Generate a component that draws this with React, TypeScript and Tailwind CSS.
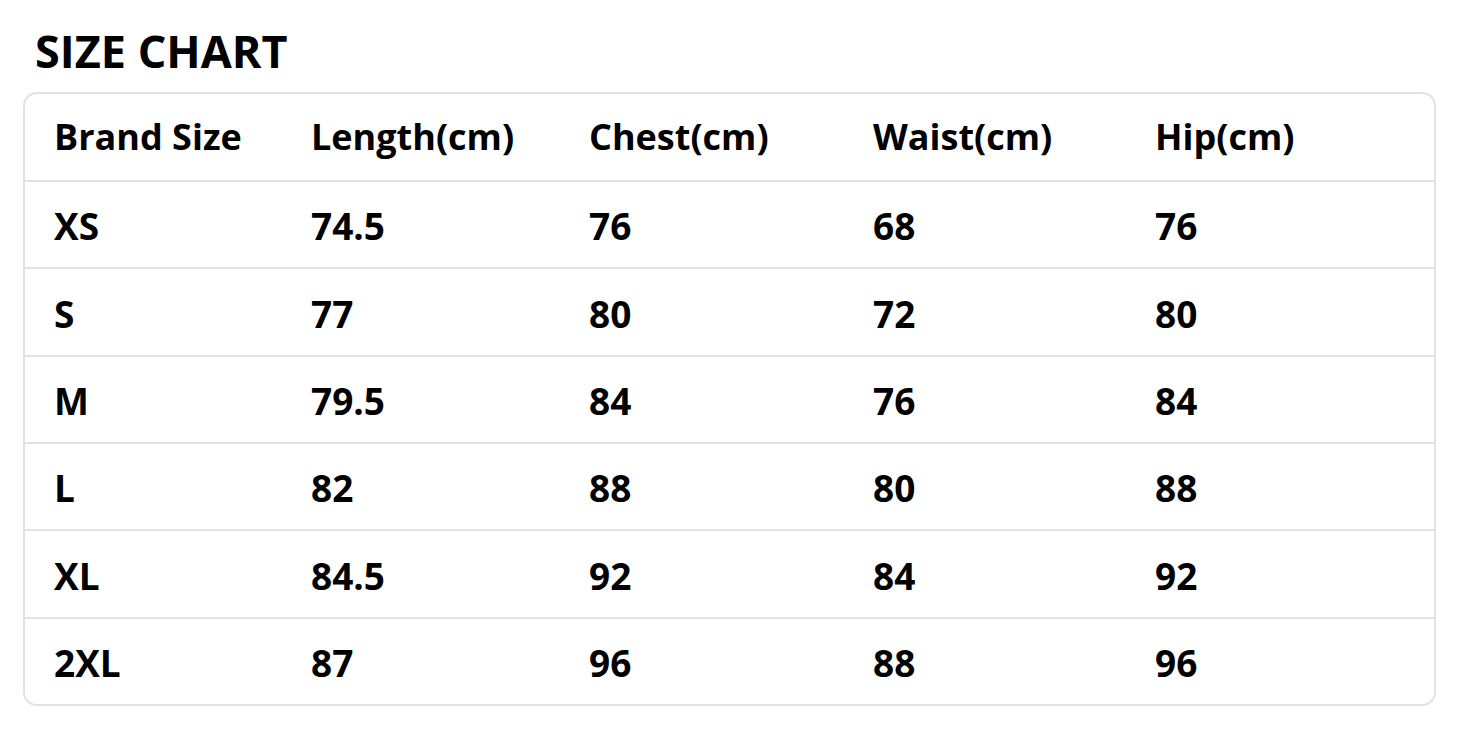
const headers = ["Brand Size", "Length(cm)", "Chest(cm)", "Waist(cm)", "Hip(cm)"];

const rows = [
  ["XS", "74.5", "76", "68", "76"],
  ["S", "77", "80", "72", "80"],
  ["M", "79.5", "84", "76", "84"],
  ["L", "82", "88", "80", "88"],
  ["XL", "84.5", "92", "84", "92"],
  ["2XL", "87", "96", "88", "96"],
];

const cols = "grid grid-cols-[257px_278px_284px_282px_1fr] pl-[29px] items-center";

export default function App() {
  return (
    <div
      className="w-[1464px] h-[736px] bg-white text-black"
      style={{ fontFamily: '"Open Sans", "Noto Sans", sans-serif' }}
    >
      <div className="pt-[25px] pl-[35px] h-[92px]">
        <h1 className="text-[45px] leading-[52px] font-bold">SIZE CHART</h1>
      </div>
      <div className="mx-[23px] w-[1413px] h-[614px] border-2 border-[#e2e2e2] rounded-[14px] overflow-hidden flex flex-col">
        <div className={`${cols} h-[88px] border-b-2 border-[#e2e2e2] text-[36px] font-bold`}>
          {headers.map((h) => (
            <div key={h}>{h}</div>
          ))}
        </div>
        {rows.map((row, i) => (
          <div
            key={row[0]}
            className={`${cols} flex-1 pt-[3px] text-[37px] font-bold ${
              i < rows.length - 1 ? "border-b-2 border-[#e2e2e2]" : ""
            }`}
          >
            {row.map((cell, j) => (
              <div key={j}>{cell}</div>
            ))}
          </div>
        ))}
      </div>
    </div>
  );
}
